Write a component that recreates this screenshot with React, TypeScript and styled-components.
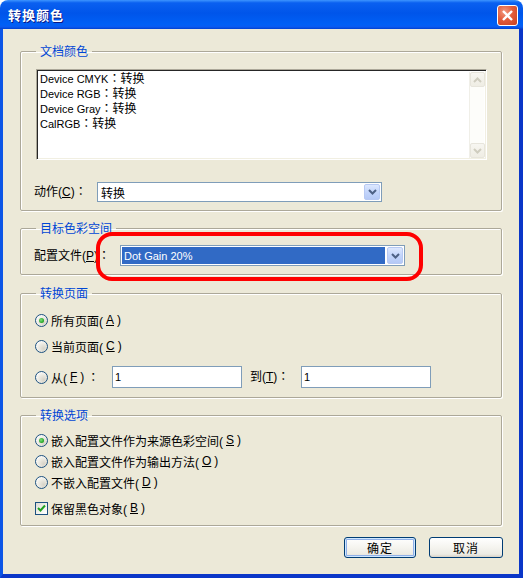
import React from "react";
import styled, { createGlobalStyle } from "styled-components";

const Global = createGlobalStyle`
  html, body { margin: 0; padding: 0; background: #ffffff; }
  body { font-family: "Liberation Sans", "Noto Sans CJK SC", sans-serif; font-size: 12px; color: #000; }
  * { box-sizing: border-box; }
`;

const Window = styled.div`
  width: 523px;
  height: 578px;
  display: flex;
  flex-direction: column;
`;

const TitleBar = styled.div`
  height: 29px;
  flex: none;
  border-radius: 8px 8px 0 0;
  background: linear-gradient(180deg, #3d95ff 0%, #0a60f0 10%, #0055ea 45%, #0060f6 85%, #0a5af0 93%, #0040d0 100%);
  display: flex;
  align-items: center;
  justify-content: space-between;
  padding: 0 5px 0 8px;
`;

const Title = styled.div`
  color: #ffffff;
  font-family: "Noto Sans CJK SC", sans-serif;
  font-weight: bold;
  font-size: 13px;
  letter-spacing: 1px;
  text-shadow: 1px 1px 0 #0a1883;
  line-height: 16px;
`;

const CloseButton = styled.div`
  width: 21px;
  height: 21px;
  border: 1px solid #ffffff;
  border-radius: 3px;
  background: radial-gradient(circle at 35% 30%, #f29a80 0%, #e35d3c 45%, #c8401f 100%);
  display: flex;
  align-items: center;
  justify-content: center;
  margin-top: 2px;
`;

const Client = styled.div`
  flex: 1;
  background: #ece9d8;
  border-left: 3px solid #0b55e6;
  border-right: 4px solid #0a36c8;
  border-bottom: 4px solid #0a36c8;
  padding: 16px 17px 0 17px;
  display: flex;
  flex-direction: column;
`;

const Group = styled.fieldset<{ $gap?: number }>`
  margin: 0 0 ${(p) => p.$gap ?? 0}px 0;
  padding: 0 14px 0 13px;
  border: 1px solid #aca899;
  border-radius: 2px;
  box-shadow: 1px 1px 0 #ffffff, inset 1px 1px 0 #ffffff;
  min-width: 0;
`;

const Legend = styled.legend`
  padding: 0 4px;
  margin-left: 2px;
  color: #0046d5;
  font-family: "Noto Sans CJK SC", sans-serif;
  font-size: 12px;
  line-height: 12px;
  height: 12px;
`;

const Col = styled.div<{ $top: number; $bottom: number }>`
  display: flex;
  flex-direction: column;
  padding-top: ${(p) => p.$top}px;
  padding-bottom: ${(p) => p.$bottom}px;
`;

const ListBox = styled.div`
  margin-left: 2px;
  height: 91px;
  width: 451px;
  background: #ffffff;
  border: 1px solid;
  border-color: #aca899 #ffffff #ffffff #aca899;
  box-shadow: inset 1px 1px 0 #262626, inset -1px -1px 0 #f1efe2;
  display: flex;
  padding: 1px 1px 1px 3px;
`;

const ListItems = styled.div`
  flex: 1;
  display: flex;
  flex-direction: column;
`;

const ListItem = styled.div`
  height: 15px;
  line-height: 12px;
  padding-top: 2px;
  font-family: "Liberation Sans", "Noto Sans CJK TC", sans-serif;
  font-size: 12px;
  white-space: nowrap;
`;

const Lat = styled.span`
  font-family: "Liberation Sans", sans-serif;
  font-size: 11px;
  line-height: 12px;
`;

const Colon = styled.span`
  font-family: "Noto Sans CJK TC", sans-serif;
  line-height: 12px;
`;

const ScrollBar = styled.div`
  width: 15px;
  margin: 1px 1px 0 0;
  display: flex;
  flex-direction: column;
  justify-content: space-between;
  background: #fdfdfa;
  border-left: 1px solid #f0efe8;
`;

const ScrollBtn = styled.div`
  width: 15px;
  height: 15px;
  border-radius: 2px;
  background: linear-gradient(180deg, #f7f6f1 0%, #efede4 100%);
  border: 1px solid #e7e5dc;
  display: flex;
  align-items: center;
  justify-content: center;
`;

const FieldRow = styled.div<{ $mt?: number; $h: number }>`
  display: flex;
  align-items: center;
  height: ${(p) => p.$h}px;
  margin-top: ${(p) => p.$mt ?? 0}px;
  position: relative;
`;

const Label = styled.div<{ $w: number; $pl?: number }>`
  width: ${(p) => p.$w}px;
  padding-left: ${(p) => p.$pl ?? 0}px;
  flex: none;
  white-space: nowrap;
  line-height: 14px;
`;

const Combo = styled.div<{ $w: number; $h: number }>`
  width: ${(p) => p.$w}px;
  height: ${(p) => p.$h}px;
  border: 1px solid #7f9db9;
  background: #ffffff;
  display: flex;
  align-items: stretch;
  padding: 1px;
`;

const ComboField = styled.div<{ $selected?: boolean }>`
  flex: 1;
  display: flex;
  align-items: center;
  padding-left: 2px;
  margin-right: 2px;
  background: ${(p) => (p.$selected ? "#316ac5" : "#ffffff")};
  color: ${(p) => (p.$selected ? "#ffffff" : "#000000")};
  white-space: nowrap;
`;

const ComboArrow = styled.div`
  width: 16px;
  flex: none;
  border: 1px solid #b7c9f3;
  border-radius: 2px;
  background: linear-gradient(180deg, #dde8fe 0%, #c3d5fb 50%, #b5c9f6 100%);
  display: flex;
  align-items: center;
  justify-content: center;
`;

const Highlight = styled.div`
  position: absolute;
  left: 62px;
  top: -13px;
  width: 327px;
  height: 49px;
  border: 4px solid #ff0000;
  border-radius: 16px;
  pointer-events: none;
`;

const OptionRow = styled.div<{ $mt: number; $h?: number }>`
  display: flex;
  align-items: center;
  height: ${(p) => p.$h ?? 16}px;
  margin-top: ${(p) => p.$mt}px;
`;

const Option = styled.div<{ $w?: number }>`
  display: flex;
  align-items: center;
  gap: 3px;
  width: ${(p) => (p.$w ? `${p.$w}px` : "auto")};
  flex: none;
  white-space: nowrap;
  margin-left: 1px;
`;

const Radio = styled.div<{ $checked?: boolean }>`
  width: 13px;
  height: 13px;
  border-radius: 50%;
  border: 1px solid #1c5180;
  background: radial-gradient(circle at 70% 70%, #d6d3c8 0%, #eceae2 45%, #ffffff 85%);
  display: flex;
  align-items: center;
  justify-content: center;
  flex: none;
  &::after {
    content: "";
    display: ${(p) => (p.$checked ? "block" : "none")};
    width: 5px;
    height: 5px;
    border-radius: 50%;
    background: radial-gradient(circle at 40% 40%, #7be07b 0%, #21a121 70%);
  }
`;

const Check = styled.div`
  width: 13px;
  height: 13px;
  border: 1px solid #1c5180;
  background: linear-gradient(135deg, #dcdcd4 0%, #f4f4f0 60%, #ffffff 100%);
  display: flex;
  align-items: center;
  justify-content: center;
  flex: none;
`;

const TextInput = styled.div<{ $w: number }>`
  width: ${(p) => p.$w}px;
  height: 22px;
  border: 1px solid #7f9db9;
  background: #ffffff;
  display: flex;
  align-items: center;
  padding-left: 2px;
  flex: none;
`;

const ButtonRow = styled.div`
  display: flex;
  justify-content: flex-end;
  gap: 13px;
  margin-top: 11px;
  margin-right: -1px;
`;

const Button = styled.div<{ $default?: boolean; $w: number }>`
  width: ${(p) => p.$w}px;
  height: 21px;
  border: 1px solid #003c74;
  border-radius: 3px;
  background: linear-gradient(180deg, #ffffff 0%, #f5f4ef 50%, #ecebe4 85%, #d8d2c6 100%);
  box-shadow: ${(p) =>
    p.$default ? "inset 0 0 0 1px #cee7ff, inset 0 0 0 2px #90b0e8" : "none"};
  display: flex;
  align-items: center;
  justify-content: center;
  font-family: "Noto Sans CJK SC", sans-serif;
  font-size: 12px;
  letter-spacing: 1px;
`;

const Chevron = ({ up, color }: { up?: boolean; color: string }) => (
  <svg width="9" height="6" viewBox="0 0 9 6">
    <path
      d={up ? "M1 5 L4.5 1.5 L8 5" : "M1 1 L4.5 4.5 L8 1"}
      fill="none"
      stroke={color}
      strokeWidth="2"
    />
  </svg>
);

const CheckMark = () => (
  <svg width="9" height="9" viewBox="0 0 9 9">
    <path d="M1 4 L3.5 6.5 L8 1.5" fill="none" stroke="#21a121" strokeWidth="2" />
  </svg>
);

export default function App() {
  return (
    <>
      <Global />
      <Window>
        <TitleBar>
          <Title>转换颜色</Title>
          <CloseButton>
            <svg width="13" height="13" viewBox="0 0 13 13">
              <path d="M2 2 L11 11 M11 2 L2 11" stroke="#ffffff" strokeWidth="2.4" />
            </svg>
          </CloseButton>
        </TitleBar>
        <Client>
          <Group $gap={11}>
            <Legend>文档颜色</Legend>
            <Col $top={12} $bottom={8}>
              <ListBox>
                <ListItems>
                  <ListItem><Lat>Device CMYK</Lat>：转换</ListItem>
                  <ListItem><Lat>Device RGB</Lat>：转换</ListItem>
                  <ListItem><Lat>Device Gray</Lat>：转换</ListItem>
                  <ListItem><Lat>CalRGB</Lat>：转换</ListItem>
                </ListItems>
                <ScrollBar>
                  <ScrollBtn><Chevron up color="#cfcdbf" /></ScrollBtn>
                  <ScrollBtn><Chevron color="#cfcdbf" /></ScrollBtn>
                </ScrollBar>
              </ListBox>
              <FieldRow $mt={22} $h={20}>
                <Label $w={63}>动作(<u>C</u>)<Colon>：</Colon></Label>
                <Combo $w={285} $h={20}>
                  <ComboField>转换</ComboField>
                  <ComboArrow><Chevron color="#4d6185" /></ComboArrow>
                </Combo>
              </FieldRow>
            </Col>
          </Group>

          <Group $gap={12}>
            <Legend>目标色彩空间</Legend>
            <Col $top={11} $bottom={8}>
              <FieldRow $h={21}>
                <Label $w={86}>配置文件(<u>P</u>)<Colon>：</Colon></Label>
                <Combo $w={285} $h={21}>
                  <ComboField $selected><Lat>Dot Gain 20%</Lat></ComboField>
                  <ComboArrow><Chevron color="#4d6185" /></ComboArrow>
                </Combo>
                <Highlight />
              </FieldRow>
            </Col>
          </Group>

          <Group $gap={11}>
            <Legend>转换页面</Legend>
            <Col $top={13} $bottom={9}>
              <OptionRow $mt={0}>
                <Option><Radio $checked />所有页面(<u>A</u>)</Option>
              </OptionRow>
              <OptionRow $mt={10}>
                <Option><Radio />当前页面(<u>C</u>)</Option>
              </OptionRow>
              <OptionRow $mt={12} $h={22}>
                <Option $w={77}><Radio />从(<u>F</u>)<Colon>：</Colon></Option>
                <TextInput $w={130}><Lat>1</Lat></TextInput>
                <Label $w={59} $pl={8}>到(<u>T</u>)<Colon>：</Colon></Label>
                <TextInput $w={130}><Lat>1</Lat></TextInput>
              </OptionRow>
            </Col>
          </Group>

          <Group>
            <Legend>转换选项</Legend>
            <Col $top={11} $bottom={9}>
              <OptionRow $mt={0}>
                <Option><Radio $checked />嵌入配置文件作为来源色彩空间(<u>S</u>)</Option>
              </OptionRow>
              <OptionRow $mt={5}>
                <Option><Radio />嵌入配置文件作为输出方法(<u>O</u>)</Option>
              </OptionRow>
              <OptionRow $mt={5}>
                <Option><Radio />不嵌入配置文件(<u>D</u>)</Option>
              </OptionRow>
              <OptionRow $mt={10}>
                <Option><Check><CheckMark /></Check>保留黑色对象(<u>B</u>)</Option>
              </OptionRow>
            </Col>
          </Group>

          <ButtonRow>
            <Button $default $w={72}>确定</Button>
            <Button $w={74}>取消</Button>
          </ButtonRow>
        </Client>
      </Window>
    </>
  );
}
